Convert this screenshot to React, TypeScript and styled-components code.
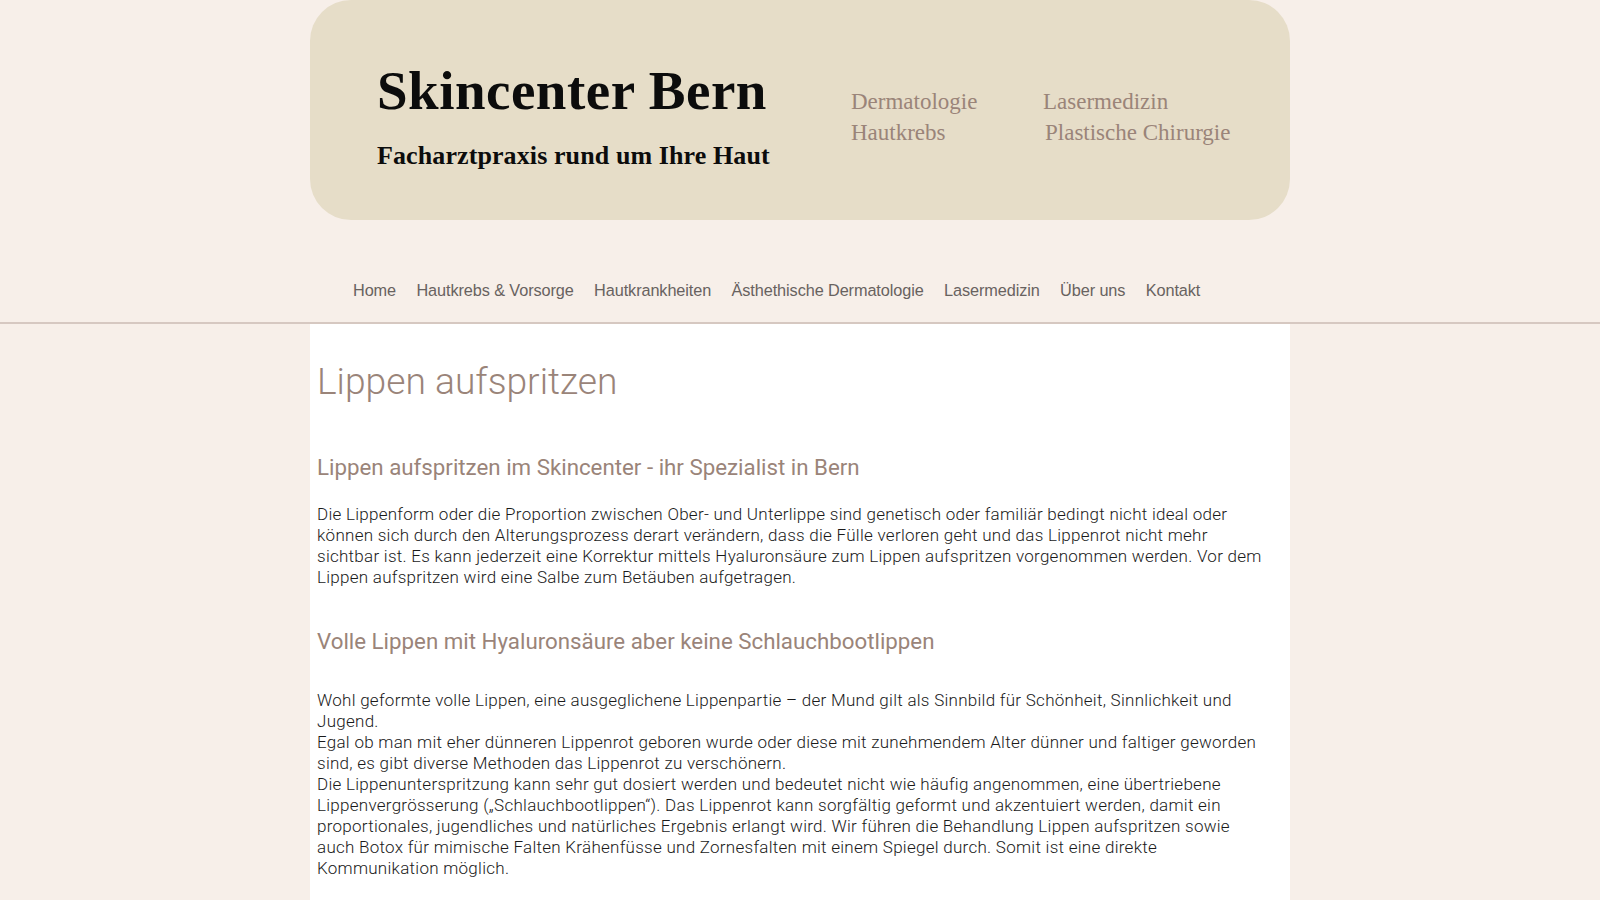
import React from "react";
import styled, { createGlobalStyle } from "styled-components";

const GlobalStyle = createGlobalStyle`
  html, body {
    margin: 0;
    padding: 0;
    background: #f7efe9;
  }
  body {
    font-family: "Liberation Sans", Arial, sans-serif;
  }
`;

const Page = styled.div`
  min-height: 900px;
  display: flex;
  flex-direction: column;
`;

const Centered = styled.div`
  width: 980px;
  margin: 0 auto;
`;

const HeaderBox = styled.header`
  height: 220px;
  box-sizing: border-box;
  background: #e6ddc8;
  border-radius: 41px;
  display: flex;
  padding: 61px 0 0 67px;
`;

const Brand = styled.div`
  width: 474px;
  display: flex;
  flex-direction: column;
`;

const Title = styled.h1`
  margin: 0;
  font-family: "Liberation Serif", "DejaVu Serif", serif;
  font-weight: 700;
  font-size: 55px;
  line-height: 60px;
  color: #0c0c0c;
  letter-spacing: 0.5px;
`;

const Subtitle = styled.p`
  margin: 20px 0 0;
  font-family: "Liberation Serif", "DejaVu Serif", serif;
  font-weight: 700;
  font-size: 26px;
  line-height: 30px;
  color: #0c0c0c;
  letter-spacing: 0.1px;
`;

const TopLinks = styled.nav`
  margin-top: 26px;
  display: grid;
  grid-template-columns: 192px auto;
  grid-auto-rows: 30.6px;
`;

const TopLink = styled.a<{ $shift?: number }>`
  font-family: "Liberation Serif", "DejaVu Serif", serif;
  font-size: 23px;
  line-height: 30.6px;
  color: #9a8479;
  text-decoration: none;
  padding-left: ${({ $shift }) => $shift ?? 0}px;
`;

const MenuBar = styled.div`
  height: 104px;
  box-sizing: border-box;
  border-bottom: 2px solid #d6c8c1;
  padding-top: 60px;
`;

const Menu = styled.nav`
  width: 980px;
  margin: 0 auto;
  box-sizing: border-box;
  padding: 0 0 0 43px;
  display: flex;
  gap: 20.4px;
`;

const MenuItem = styled.a`
  font-family: "Liberation Sans", Arial, sans-serif;
  font-size: 16.3px;
  line-height: 20px;
  color: #686260;
  text-decoration: none;
  letter-spacing: -0.1px;
`;

const Content = styled.main`
  flex: 1;
  width: 980px;
  margin: 0 auto;
  background: #ffffff;
  box-sizing: border-box;
  padding: 34px 26px 40px 7px;
`;

const PageTitle = styled.h2`
  margin: 0;
  font-family: Roboto, "Liberation Sans", sans-serif;
  font-weight: 300;
  font-size: 37.2px;
  line-height: 46px;
  color: #9a8479;
`;

const SectionTitle = styled.h3<{ $top: number }>`
  margin: ${({ $top }) => $top}px 0 0;
  font-family: Roboto, "Liberation Sans", sans-serif;
  font-weight: 400;
  font-size: 22.3px;
  line-height: 28px;
  color: #9a8479;
`;

const Paragraph = styled.p<{ $top: number }>`
  margin: ${({ $top }) => $top}px 0 0;
  font-family: Roboto, "Liberation Sans", sans-serif;
  font-weight: 300;
  font-size: 17px;
  line-height: 21px;
  letter-spacing: 0.27px;
  color: #1a1a1a;
`;

const menuItems = [
  "Home",
  "Hautkrebs & Vorsorge",
  "Hautkrankheiten",
  "Ästhethische Dermatologie",
  "Lasermedizin",
  "Über uns",
  "Kontakt",
];

export default function App() {
  return (
    <Page>
      <GlobalStyle />
      <Centered>
        <HeaderBox>
          <Brand>
            <Title>Skincenter Bern</Title>
            <Subtitle>Facharztpraxis rund um Ihre Haut</Subtitle>
          </Brand>
          <TopLinks>
            <TopLink href="#">Dermatologie</TopLink>
            <TopLink href="#">Lasermedizin</TopLink>
            <TopLink href="#">Hautkrebs</TopLink>
            <TopLink href="#" $shift={2}>
              Plastische Chirurgie
            </TopLink>
          </TopLinks>
        </HeaderBox>
      </Centered>
      <MenuBar>
        <Menu>
          {menuItems.map((item) => (
            <MenuItem key={item} href="#">
              {item}
            </MenuItem>
          ))}
        </Menu>
      </MenuBar>
      <Content>
        <PageTitle>Lippen aufspritzen</PageTitle>
        <SectionTitle $top={49}>
          Lippen aufspritzen im Skincenter - ihr Spezialist in Bern
        </SectionTitle>
        <Paragraph $top={23}>
          Die Lippenform oder die Proportion zwischen Ober- und Unterlippe sind
          genetisch oder familiär bedingt nicht ideal oder können sich durch den
          Alterungsprozess derart verändern, dass die Fülle verloren geht und
          das Lippenrot nicht mehr sichtbar ist. Es kann jederzeit eine
          Korrektur mittels Hyaluronsäure zum Lippen aufspritzen vorgenommen
          werden. Vor dem Lippen aufspritzen wird eine Salbe zum Betäuben
          aufgetragen.
        </Paragraph>
        <SectionTitle $top={39}>
          Volle Lippen mit Hyaluronsäure aber keine Schlauchbootlippen
        </SectionTitle>
        <Paragraph $top={35}>
          Wohl geformte volle Lippen, eine ausgeglichene Lippenpartie – der
          Mund gilt als Sinnbild für Schönheit, Sinnlichkeit und Jugend.
          <br />
          Egal ob man mit eher dünneren Lippenrot geboren wurde oder diese mit
          zunehmendem Alter dünner und faltiger geworden sind, es gibt diverse
          Methoden das Lippenrot zu verschönern.
          <br />
          Die Lippenunterspritzung kann sehr gut dosiert werden und bedeutet
          nicht wie häufig angenommen, eine übertriebene Lippenvergrösserung
          („Schlauchbootlippen“). Das Lippenrot kann sorgfältig geformt und
          akzentuiert werden, damit ein proportionales, jugendliches und
          natürliches Ergebnis erlangt wird. Wir führen die Behandlung Lippen
          aufspritzen sowie auch Botox für mimische Falten Krähenfüsse und
          Zornesfalten mit einem Spiegel durch. Somit ist eine direkte
          Kommunikation möglich.
        </Paragraph>
      </Content>
    </Page>
  );
}
